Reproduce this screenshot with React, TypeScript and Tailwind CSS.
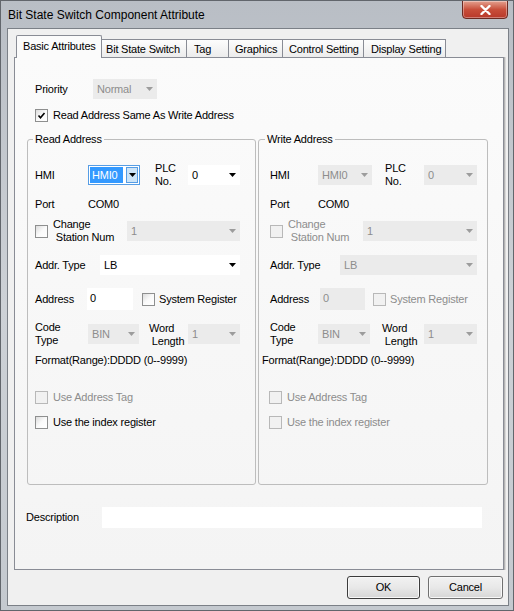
import React from "react";

type Group = {
  title: string;
  enabled: boolean;
  legend: string;
  width: string;
  pad: string;
  hmiLabel: string;
  hmiCombo: string;
  plcLabel: string;
  plcCombo: string;
  stationText: string;
  stationCombo: string;
  addrLabel: string;
  addrCombo: string;
  addressLabel: string;
  addressInput: string;
  sysReg: string;
  codeLabel: string;
  binCombo: string;
  wordLabel: string;
  wordCombo: string;
  format: string;
  tag: string;
};

const GROUPS: Group[] = [
  {
    title: "Read Address",
    enabled: true,
    legend: "-ml-[2px]",
    width: "w-[229px]",
    pad: "pl-[7px]",
    hmiLabel: "w-[53px]",
    hmiCombo: "w-[52px]",
    plcLabel: "ml-[15px] w-[33px]",
    plcCombo: "w-[52px]",
    stationText: "w-[74px]",
    stationCombo: "w-[113px]",
    addrLabel: "w-[65px]",
    addrCombo: "w-[140px]",
    addressLabel: "w-[52px]",
    addressInput: "w-[46px]",
    sysReg: "ml-[9px]",
    codeLabel: "w-[53px]",
    binCombo: "w-[51px]",
    wordLabel: "ml-[10px] w-[39px]",
    wordCombo: "w-[52px]",
    format: "ml-0",
    tag: "ml-0",
  },
  {
    title: "Write Address",
    enabled: false,
    legend: "-ml-[5px]",
    width: "w-[230px]",
    pad: "pl-[11px]",
    hmiLabel: "w-[48px]",
    hmiCombo: "w-[54px]",
    plcLabel: "ml-[13px] w-[39px]",
    plcCombo: "w-[53px]",
    stationText: "w-[75px]",
    stationCombo: "w-[114px]",
    addrLabel: "w-[70px]",
    addrCombo: "w-[137px]",
    addressLabel: "w-[50px]",
    addressInput: "w-[45px]",
    sysReg: "ml-[8px]",
    codeLabel: "w-[48px]",
    binCombo: "w-[52px]",
    wordLabel: "ml-[12px] w-[42px]",
    wordCombo: "w-[53px]",
    format: "-ml-[8px]",
    tag: "-ml-px",
  },
];

const TABS = [
  { label: "Basic Attributes", w: "w-[86px]", pl: "pl-[6px]", active: true },
  { label: "Bit State Switch", w: "w-[85px]", pl: "pl-[4px]" },
  { label: "Tag", w: "w-[42px]", pl: "pl-[7px]" },
  { label: "Graphics", w: "w-[54px]", pl: "pl-[6px]" },
  { label: "Control Setting", w: "w-[81px]", pl: "pl-[6px]" },
  { label: "Display Setting", w: "w-[82px]", pl: "pl-[7px]" },
];

function Arrow({ disabled }: { disabled?: boolean }) {
  return (
    <svg width="7" height="4" viewBox="0 0 7 4" className="shrink-0">
      <path d="M0 0h7L3.5 4z" fill={disabled ? "#9c9c9c" : "#000"} />
    </svg>
  );
}

function Combo({
  value,
  width,
  disabled,
  focused,
}: {
  value: string;
  width: string;
  disabled?: boolean;
  focused?: boolean;
}) {
  if (focused) {
    return (
      <div className={`${width} h-[20px] flex items-center border border-[#569de5] bg-white shrink-0`}>
        <span className="ml-px h-[16px] w-[33px] pl-[2px] flex items-center bg-[#3399ff] text-white">{value}</span>
        <span className="ml-auto mr-px h-[16px] w-[12px] flex items-center justify-center bg-[#cde4f7] border border-[#569de5]">
          <Arrow />
        </span>
      </div>
    );
  }
  return (
    <div
      className={`${width} h-[20px] flex items-center pl-[4px] pr-[4px] shrink-0 ${
        disabled ? "bg-[#ebebeb] text-[#8d8d8d]" : "bg-white text-black"
      }`}
    >
      <span>{value}</span>
      <span className="ml-auto">
        <Arrow disabled={disabled} />
      </span>
    </div>
  );
}

function Check({ checked, disabled }: { checked?: boolean; disabled?: boolean }) {
  return (
    <span
      className={`w-[13px] h-[13px] shrink-0 flex items-center justify-center border ${
        disabled
          ? "border-[#b8b8b8] bg-[#f1f1f1]"
          : "border-[#8e8f8f] bg-gradient-to-br from-[#dcdcdc] via-[#fafafa] to-white"
      }`}
    >
      {checked && (
        <svg width="9" height="9" viewBox="0 0 9 9">
          <path d="M1.5 4.5l2 2.3L7.5 2" stroke="#000" strokeWidth="1.6" fill="none" />
        </svg>
      )}
    </span>
  );
}

function AddressGroup({ g }: { g: Group }) {
  const off = !g.enabled;
  const grey = "text-[#8d8d8d]";
  return (
    <fieldset className={`${g.width} h-[352px] border border-[#bdbdbd] rounded-[3px] ${g.pad}`}>
      <legend className={`${g.legend} px-[2px] leading-[13px]`}>{g.title}</legend>

      <div className="mt-[19px] h-[20px] flex items-center">
        <span className={g.hmiLabel}>HMI</span>
        <Combo value="HMI0" width={g.hmiCombo} focused={g.enabled} disabled={off} />
        <span className={`${g.plcLabel} leading-[13px]`}>
          PLC
          <br />
          No.
        </span>
        <Combo value="0" width={g.plcCombo} disabled={off} />
      </div>

      <div className="mt-[12px] h-[14px] flex items-center">
        <span className={g.hmiLabel}>Port</span>
        <span>COM0</span>
      </div>

      <div className="mt-[10px] h-[20px] flex items-center">
        <Check disabled={off} />
        <span className={`ml-[5px] ${g.stationText} leading-[13px] ${off ? grey : ""}`}>
          Change
          <br />
          &nbsp;Station Num
        </span>
        <Combo value="1" width={g.stationCombo} disabled />
      </div>

      <div className="mt-[14px] h-[20px] flex items-center">
        <span className={g.addrLabel}>Addr. Type</span>
        <Combo value="LB" width={g.addrCombo} disabled={off} />
      </div>

      <div className="mt-[13px] h-[22px] flex items-center">
        <span className={g.addressLabel}>Address</span>
        <div
          className={`${g.addressInput} h-[22px] flex items-start pt-[2px] pl-[3px] ${
            off ? "bg-[#ebebeb] text-[#8d8d8d]" : "bg-white"
          }`}
        >
          0
        </div>
        <span className={`${g.sysReg} flex items-center gap-[4px] ${off ? grey : ""}`}>
          <Check disabled={off} />
          System Register
        </span>
      </div>

      <div className="mt-[11px] h-[26px] flex items-center">
        <span className={`${g.codeLabel} leading-[13px]`}>
          Code
          <br />
          Type
        </span>
        <Combo value="BIN" width={g.binCombo} disabled />
        <span className={`${g.wordLabel} leading-[13px] pt-[2px]`}>
          Word
          <br />
          &nbsp;Length
        </span>
        <Combo value="1" width={g.wordCombo} disabled />
      </div>

      <div className={`mt-[7px] h-[13px] leading-[13px] ${g.format}`}>Format(Range):DDDD (0--9999)</div>

      <div className={`mt-[23px] h-[14px] flex items-center gap-[5px] ${g.tag} ${grey}`}>
        <Check disabled />
        Use Address Tag
      </div>
      <div className={`mt-[11px] h-[14px] flex items-center gap-[5px] ${g.tag} ${off ? grey : ""}`}>
        <Check disabled={off} />
        Use the index register
      </div>
    </fieldset>
  );
}

export default function App() {
  return (
    <div className="w-[514px] h-[611px] flex flex-col border border-[#62666c] bg-gradient-to-b from-[#b9bec5] via-[#cdd1d6] to-[#c4c9cf] font-['Liberation_Sans',Arial,sans-serif] text-[11px] tracking-[-0.2px] text-black overflow-hidden">
      {/* title bar */}
      <div className="h-[27px] flex items-start shrink-0">
        <span className="ml-[7px] mt-[5px] text-[12px] tracking-normal text-black">Bit State Switch Component Attribute</span>
        <div className="ml-auto mr-[5px] -mt-px w-[46px] h-[19px] rounded-b-[4px] border border-[#6b2a22] bg-gradient-to-b from-[#e3a08f] via-[#c84e3a] to-[#b8382a] flex items-center justify-center shadow-[inset_0_0_0_1px_rgba(255,255,255,0.35)]">
          <svg width="11" height="10" viewBox="0 0 11 10">
            <path d="M1.5 1l8 8M9.5 1l-8 8" stroke="#fff" strokeWidth="2.4" strokeLinecap="round" />
          </svg>
        </div>
      </div>

      {/* client area */}
      <div className="ml-[6px] mr-[4px] h-[578px] border border-[#7b8087] bg-[#f0f0f0] flex flex-col">
        {/* tabs */}
        <div className="mt-[6px] ml-[8px] h-[22px] flex items-end">
          {TABS.map((t) =>
            t.active ? (
              <div
                key={t.label}
                className={`${t.w} ${t.pl} h-[23px] -mb-px relative z-10 pt-[2px] border border-b-0 border-[#898c95] bg-[#fbfbfb] rounded-t-[2px]`}
              >
                {t.label}
              </div>
            ) : (
              <div
                key={t.label}
                className={`${t.w} ${t.pl} h-[18px] pt-[1px] border-t border-r border-[#898c95] bg-gradient-to-b from-[#fdfdfd] to-[#ececec]`}
              >
                {t.label}
              </div>
            )
          )}
        </div>

        {/* tab page */}
        <div className="ml-[6px] mr-[4px] h-[513px] border border-[#898c95] bg-gradient-to-b from-[#fbfbfb] to-[#f4f4f4] shadow-[1px_0_0_#b4b4b4,2px_0_0_#d8d8d8] flex flex-col">
          <div className="mt-[21px] ml-[20px] h-[20px] flex items-center">
            <span className="w-[58px]">Priority</span>
            <Combo value="Normal" width="w-[64px]" disabled />
          </div>

          <div className="mt-[9px] ml-[20px] h-[14px] flex items-center gap-[5px]">
            <Check checked />
            <span>Read Address Same As Write Address</span>
          </div>

          <div className="mt-[11px] ml-[12px] flex gap-[2px]">
            {GROUPS.map((g) => (
              <AddressGroup key={g.title} g={g} />
            ))}
          </div>

          <div className="mt-[22px] ml-[11px] h-[21px] flex items-center">
            <span className="w-[76px]">Description</span>
            <div className="w-[380px] h-[21px] bg-white" />
          </div>
        </div>

        {/* buttons */}
        <div className="mt-[6px] mr-[5px] flex justify-end gap-[8px]">
          <button className="w-[73px] h-[23px] rounded-[3px] border border-[#3c3c3c] bg-gradient-to-b from-[#f2f2f2] via-[#e8e8e8] to-[#d6d6d6] shadow-[inset_0_0_0_1px_#f8f8f8]">
            OK
          </button>
          <button className="w-[75px] h-[23px] rounded-[3px] border border-[#707070] bg-gradient-to-b from-[#f2f2f2] via-[#e8e8e8] to-[#d6d6d6] shadow-[inset_0_0_0_1px_#f8f8f8]">
            Cancel
          </button>
        </div>
      </div>
    </div>
  );
}
